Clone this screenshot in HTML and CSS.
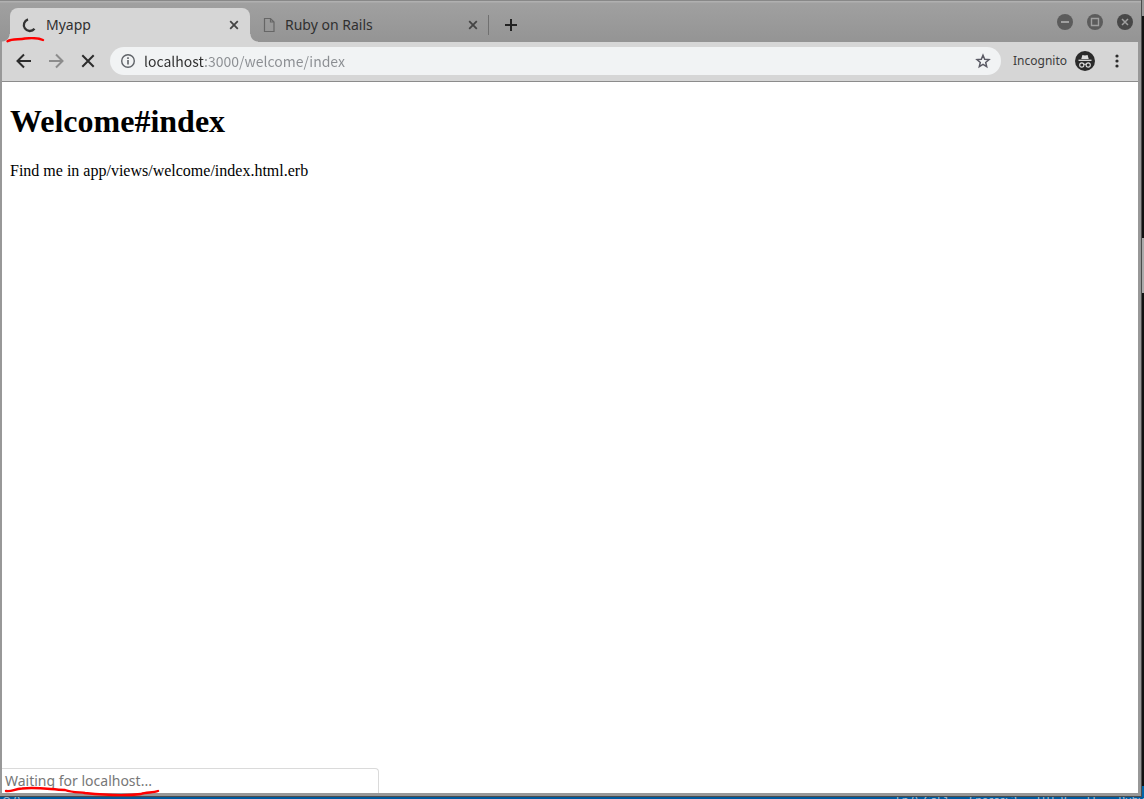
FILE: index.html
```html
<!DOCTYPE html>
<html lang="en">
<head>
<meta charset="utf-8">
<title>Myapp</title>
<link rel="stylesheet" href="styles.css">
</head>
<body>
<div class="desktop">
  <div class="window">
    <header class="tabstrip">
      <div class="tab tab-active">
        <svg class="spinner" width="16" height="16" viewBox="0 0 16 16"><path d="M7 2.300A6 6 0 1 0 13.500 11.800" fill="none" stroke="#333" stroke-width="2.300"/></svg>
        <span class="tab-title">Myapp</span>
        <button class="tab-close" aria-label="Close Myapp"><svg width="10" height="10" viewBox="0 0 10 10"><path d="M1.200 1.200l7.600 7.600M8.800 1.200L1.200 8.800" stroke="#444" stroke-width="1.800"/></svg></button>
        <svg class="mark mark-tab" width="40" height="6" viewBox="0 0 40 6"><path d="M1.500 4.200C6 1.600 13 2.800 19 1.500C25 .900 33 1.200 37 3" fill="none" stroke="#f00" stroke-width="2.400" stroke-linecap="round"/></svg>
      </div>
      <div class="tab">
        <svg class="page-icon" width="12" height="16" viewBox="0 0 12 16"><path d="M1.500 1.500h6l3.500 3.500v9.500H1.500zM7.500 1.500V5H11" fill="none" stroke="#666" stroke-width="1.200"/></svg>
        <span class="tab-title">Ruby on Rails</span>
        <button class="tab-close" aria-label="Close Ruby on Rails"><svg width="10" height="10" viewBox="0 0 10 10"><path d="M1.200 1.200l7.600 7.600M8.800 1.200L1.200 8.800" stroke="#444" stroke-width="1.800"/></svg></button>
      </div>
      <button class="new-tab" aria-label="New tab"><svg width="12" height="12" viewBox="0 0 12 12"><path d="M6 0v12M0 6h12" stroke="#222" stroke-width="2"/></svg></button>
      <div class="window-buttons">
        <button aria-label="Minimize"><svg width="16" height="16" viewBox="0 0 16 16"><circle cx="8" cy="8" r="8" fill="#5c5c5c"/><path d="M4 8h8" stroke="#a0a0a0" stroke-width="2"/></svg></button>
        <button aria-label="Maximize"><svg width="16" height="16" viewBox="0 0 16 16"><circle cx="8" cy="8" r="8" fill="#5c5c5c"/><path d="M4.500 4.500h7v7h-7z" fill="#5c5c5c" stroke="#a0a0a0" stroke-width="1.400"/></svg></button>
        <button aria-label="Close window"><svg width="16" height="16" viewBox="0 0 16 16"><circle cx="8" cy="8" r="8" fill="#484848"/><path d="M5 5l6 6M11 5l-6 6" stroke="#a0a0a0" stroke-width="1.500"/></svg></button>
      </div>
    </header>
    <nav class="toolbar">
      <button aria-label="Back"><svg width="16" height="16" viewBox="0 0 16 16"><path d="M15 8H2M8 1.500L1.500 8 8 14.500" fill="none" stroke="#2c2c2c" stroke-width="2"/></svg></button>
      <button aria-label="Forward"><svg width="16" height="16" viewBox="0 0 16 16"><path d="M1 8h13M8 1.500L14.500 8 8 14.500" fill="none" stroke="#8c8c8c" stroke-width="2"/></svg></button>
      <button aria-label="Stop"><svg width="16" height="16" viewBox="0 0 16 16"><path d="M2.300 2.300l11.400 11.400M13.700 2.300L2.300 13.700" stroke="#2c2c2c" stroke-width="2"/></svg></button>
      <div class="omnibox">
        <svg width="16" height="16" viewBox="0 0 16 16"><circle cx="8" cy="8" r="6.300" fill="none" stroke="#5f6368" stroke-width="1.400"/><path d="M8 7v4.500M8 4.300v1.600" stroke="#5f6368" stroke-width="1.600"/></svg>
        <input class="address" type="text" aria-label="Address" value="localhost:3000/welcome/index">
        <button aria-label="Bookmark this page"><svg width="16" height="16" viewBox="0 0 16 16"><path d="M8 2.200l1.700 4 4.300.400-3.300 2.800 1 4.200L8 11.400l-3.700 2.200 1-4.200L2 6.600l4.300-.400z" fill="none" stroke="#5a5a64" stroke-width="1.500"/></svg></button>
      </div>
      <button class="profile">
        <span>Incognito</span>
        <svg width="20" height="20" viewBox="0 0 20 20"><circle cx="10" cy="10" r="10" fill="#2b2b2b"/><path d="M3.500 9.300h13" stroke="#ddd" stroke-width="1.300"/><path d="M6.300 7.900L7.400 3.900 10 4.600l2.600-.700 1.100 4z" fill="#ddd"/><path d="M8.700 13.500q1.300-.800 2.600 0" fill="none" stroke="#ddd"/><circle cx="6.800" cy="14" r="2.100" fill="none" stroke="#ddd" stroke-width="1.100"/><circle cx="13.200" cy="14" r="2.100" fill="none" stroke="#ddd" stroke-width="1.100"/></svg>
      </button>
      <button class="menu" aria-label="Menu"><svg width="4" height="14" viewBox="0 0 4 14"><g fill="#2c2c2c"><circle cx="2" cy="2" r="1.600"/><circle cx="2" cy="7" r="1.600"/><circle cx="2" cy="12" r="1.600"/></g></svg></button>
    </nav>
    <main class="page">
      <h1>Welcome#index</h1>
      <p>Find me in app/views/welcome/index.html.erb</p>
      <div class="status-bubble">Waiting for localhost...
        <svg class="mark mark-status" width="158" height="12" viewBox="0 0 158 12"><path d="M2 6C8 7 10 4 18 3.500C32 2 43 4 61 5C69 8 77 7 81 8C100 10 122 11 137 9C142 7 149 8 154 6" fill="none" stroke="#f00" stroke-width="2.400" stroke-linecap="round"/></svg>
      </div>
    </main>
  </div>
  <div class="backdrop"></div>
</div>
<footer class="editor-status"><span>⊗ 0</span><div class="editor-info"><span>Ln 9, Col 1</span><span>Spaces: 2</span><span>UTF-8</span><span>LF</span><span>Ruby</span></div></footer>
</body>
</html>
```
FILE: styles.css
```css
* { box-sizing: border-box; }
body {
  margin: 0;
  height: 100vh;
  display: flex;
  flex-direction: column;
  overflow: hidden;
  background: #005a9e;
  font-family: "Noto Sans", sans-serif;
}
button {
  display: flex;
  align-items: center;
  justify-content: center;
  padding: 0;
  border: 0;
  background: none;
  font: inherit;
  color: inherit;
}
svg { display: block; flex: none; }
.desktop { flex: 1; display: flex; min-height: 0; }
.backdrop {
  width: 2px;
  background: linear-gradient(#999 0 16px, #111 16px 238px, #aaa 238px 293px, #111 293px calc(100% - 11px), #0065a9 calc(100% - 11px));
}
.window {
  flex: 1;
  min-width: 0;
  display: flex;
  flex-direction: column;
  border-right: 1px solid #4c4c4c;
  border-bottom: 1px solid #4c4c4c;
  background: #989898;
}
.tabstrip {
  display: flex;
  height: 42px;
  padding: 7px 8px 0 10px;
  border-top: 1px solid #888;
  background: linear-gradient(#b0b0b0 0 1px, #a0a0a0 2px, #949494);
}
.tab {
  position: relative;
  display: flex;
  align-items: center;
  width: 239px;
  padding: 0 11px 0 13px;
  color: #303030;
  font-size: 14px;
  line-height: 20px;
}
.tab::after {
  content: "";
  position: absolute;
  right: 0;
  top: 7px;
  width: 1px;
  height: 20px;
  background: #707070;
}
.tab-active {
  width: 240px;
  padding: 0 11px;
  border-radius: 8px 8px 0 0;
  background: #d6d6d6;
}
.tab-active::after {
  right: -8px;
  top: auto;
  bottom: 0;
  width: 8px;
  height: 8px;
  background: radial-gradient(circle at 100% 0, transparent 7px, #d6d6d6 8px);
}
.tab-active::before {
  content: "";
  position: absolute;
  left: -8px;
  bottom: 0;
  width: 8px;
  height: 8px;
  background: radial-gradient(circle at 0 0, transparent 7px, #d6d6d6 8px);
}
.tab-title { flex: 1; padding-left: 10px; }
.tab-active .tab-title { padding-left: 9px; }
.new-tab { width: 44px; }
.window-buttons { display: flex; gap: 14px; height: 28px; margin-left: auto; align-items: center; }
.toolbar {
  display: flex;
  align-items: center;
  gap: 16px;
  height: 40px;
  margin: 0 3px 0 2px;
  padding: 0 19px 1px 14px;
  border-bottom: 1px solid #8c8c8c;
  background: #d6d6d6;
}
.omnibox {
  flex: 1;
  display: flex;
  align-items: center;
  gap: 8px;
  height: 28px;
  margin-left: -2px;
  padding: 0 10px;
  border-radius: 14px;
  background: #f1f3f4;
}
.address {
  flex: 1;
  min-width: 0;
  padding: 0;
  border: 0;
  outline: 0;
  font: 14px/20px "Noto Sans CJK SC", "Noto Sans", sans-serif;
  color: transparent;
  background: linear-gradient(90deg, #2c2c2c 60px, #8a8d91 60px);
  -webkit-background-clip: text;
  background-clip: text;
}
.profile { gap: 8px; margin-left: -4px; font-size: 12px; line-height: 20px; color: #3c3c3c; }
.menu { margin-left: 4px; }
.page {
  position: relative;
  flex: 1;
  margin: 0 3px 3px 2px;
  padding: 21px 8px;
  background: #fff;
  color: #000;
  font-family: "Liberation Serif", serif;
}
.page h1 { margin: 0 0 22px; font-size: 32px; line-height: 37px; }
.page p { margin: 0; font-size: 16px; line-height: 18px; }
.status-bubble {
  position: absolute;
  left: 0;
  bottom: 0;
  width: 377px;
  height: 25px;
  padding-left: 3px;
  border: 1px solid #dadada;
  border-width: 1px 1px 0 0;
  border-top-right-radius: 4px;
  background: #fff;
  color: #777;
  font: 14px/24px "Noto Sans", sans-serif;
}
.mark { position: absolute; }
.mark-tab { left: -4px; bottom: -1px; z-index: 1; }
.mark-status { left: 2px; bottom: -4px; }
.editor-status {
  display: flex;
  justify-content: space-between;
  height: 2px;
  overflow: hidden;
  padding-left: 2px;
  background: #005a9e;
  color: #a9c4dc;
  font-size: 11px;
  line-height: 6px;
}
.editor-info { display: flex; gap: 20px; }
```
